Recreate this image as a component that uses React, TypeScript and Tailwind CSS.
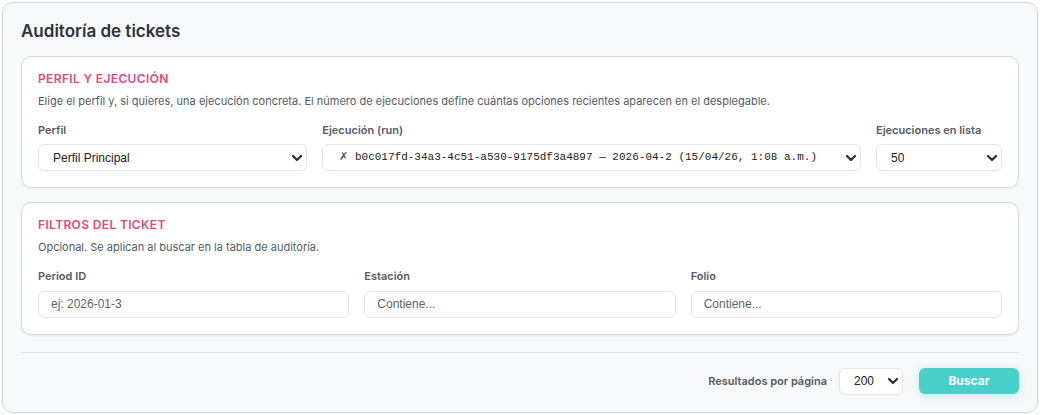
import { ChevronDown } from "lucide-react";

const sans = "font-['Inter','Noto_Sans',sans-serif]";
const arial = "font-['Liberation_Sans',Arial,sans-serif]";

function Label({ children }: { children: React.ReactNode }) {
  return (
    <div className={`mb-[7px] text-[11px] font-semibold leading-[14px] text-[#555b66] ${sans}`}>
      {children}
    </div>
  );
}

function FakeSelect({
  value,
  mono,
  className = "",
}: {
  value: React.ReactNode;
  mono?: boolean;
  className?: string;
}) {
  return (
    <div
      className={`flex h-[27px] items-center justify-between rounded-md border border-[#e3e5ea] bg-white pl-[14px] pr-[1px] ${className}`}
    >
      <span
        className={
          mono
            ? "truncate font-['Liberation_Mono','DejaVu_Sans_Mono',monospace] text-[11px] text-[#222]"
            : `truncate text-[12px] text-[#222] ${arial}`
        }
      >
        {value}
      </span>
      <ChevronDown className="h-4 w-4 shrink-0 text-[#333]" strokeWidth={3.5} />
    </div>
  );
}

function TextInput({ placeholder }: { placeholder: string }) {
  return (
    <input
      placeholder={placeholder}
      className={`h-[27px] w-full rounded-md border border-[#e3e5ea] bg-white px-3 text-[12px] text-[#222] placeholder:text-[#5f6368] outline-none ${arial}`}
    />
  );
}

function Section({
  title,
  desc,
  children,
}: {
  title: string;
  desc: string;
  children: React.ReactNode;
}) {
  return (
    <section className="rounded-[10px] border border-[#d6d7dc] bg-white px-4 pb-4 pt-[14px] shadow-[0_1px_2px_rgba(0,0,0,0.06)]">
      <h2 className={`text-[12px] font-semibold uppercase leading-4 tracking-[0.03em] text-[#e8467c] ${sans}`}>
        {title}
      </h2>
      <p className={`mt-[6px] text-[11px] leading-4 text-[#555b66] ${sans}`}>{desc}</p>
      <div className="mt-[14px]">{children}</div>
    </section>
  );
}

export default function App() {
  return (
    <div className="bg-white p-[2px]">
      <div className="h-[411px] rounded-[10px] border border-[#d4d5da] bg-[#f8f9fb] px-[18px] pt-[17px]">
        <h1 className={`text-[17px] font-semibold leading-[22px] text-[#2d3340] ${sans}`}>
          Auditoría de tickets
        </h1>

        <div className="mt-[14px] flex flex-col gap-[14px]">
          <Section
            title="Perfil y ejecución"
            desc="Elige el perfil y, si quieres, una ejecución concreta. El número de ejecuciones define cuántas opciones recientes aparecen en el desplegable."
          >
            <div className="grid grid-cols-[1fr_2fr_126px] gap-[15px]">
              <div>
                <Label>Perfil</Label>
                <FakeSelect value="Perfil Principal" />
              </div>
              <div>
                <Label>Ejecución (run)</Label>
                <FakeSelect
                  mono
                  className="!pl-[16px]"
                  value={
                    <>
                      <span className="font-['DejaVu_Sans',sans-serif] font-light text-[#555]">✗</span>
                      {" b0c017fd-34a3-4c51-a530-9175df3a4897 — 2026-04-2 (15/04/26, 1:08 a.m.)"}
                    </>
                  }
                />
              </div>
              <div>
                <Label>Ejecuciones en lista</Label>
                <FakeSelect value="50" />
              </div>
            </div>
          </Section>

          <Section
            title="Filtros del ticket"
            desc="Opcional. Se aplican al buscar en la tabla de auditoría."
          >
            <div className="grid grid-cols-3 gap-[15px]">
              <div>
                <Label>Period ID</Label>
                <TextInput placeholder="ej: 2026-01-3" />
              </div>
              <div>
                <Label>Estación</Label>
                <TextInput placeholder="Contiene..." />
              </div>
              <div>
                <Label>Folio</Label>
                <TextInput placeholder="Contiene..." />
              </div>
            </div>
          </Section>
        </div>

        <div className="mt-[17px] border-t border-[#e4e6eb]" />

        <div className="mt-[15px] flex items-center justify-end">
          <span className={`text-[11px] font-semibold text-[#555b66] ${sans}`}>
            Resultados por página
          </span>
          <FakeSelect value="200" className="ml-[12px] w-[64px] !pl-[14px]" />
          <button
            className={`ml-[16px] h-[26px] w-[100px] rounded-md bg-[#4ad0cb] text-[12px] font-bold text-white shadow-[0_2px_8px_rgba(74,208,203,0.35)] ${sans}`}
          >
            Buscar
          </button>
        </div>
      </div>
    </div>
  );
}
